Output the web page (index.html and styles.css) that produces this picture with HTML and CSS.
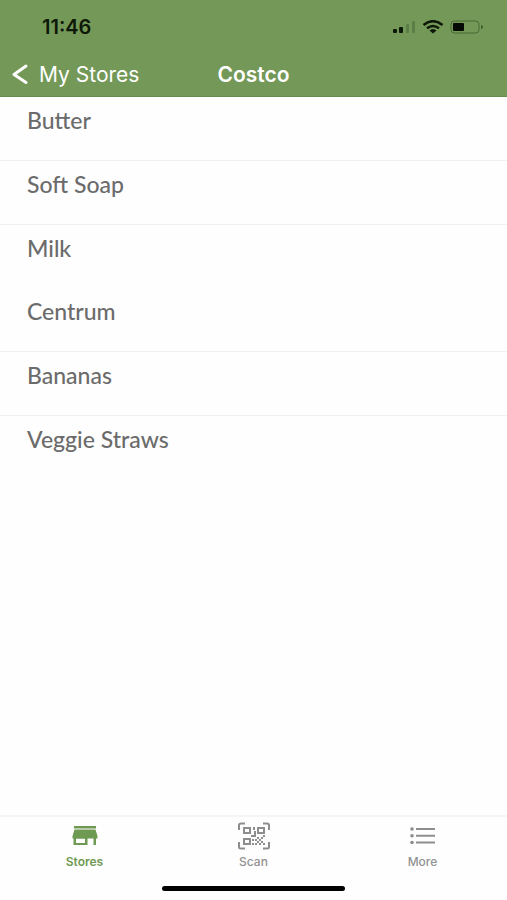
FILE: index.html
```html
<!DOCTYPE html>
<html lang="en">
<head>
<meta charset="utf-8">
<meta name="viewport" content="width=device-width, initial-scale=1">
<title>Costco</title>
<link rel="stylesheet" href="styles.css">
</head>
<body>
<header class="header">
  <div class="status">
    <span class="time">11:46</span>
    <div class="indicators">
      <svg width="24" height="14" viewBox="0 0 24 14" aria-hidden="true">
        <rect x="1" y="9" width="4" height="4" rx="1" fill="#0d1808"/>
        <rect x="7" y="7" width="4" height="6" rx="1" fill="#0d1808"/>
        <rect x="14" y="4" width="3" height="9" rx="1" fill="#5a7e45"/>
        <rect x="20" y="1" width="3" height="12" rx="1" fill="#5a7e45"/>
      </svg>
      <svg width="22" height="14" viewBox="0 0 22 14" fill="none" stroke="#0d1808" aria-hidden="true">
        <path d="M1.5 5Q11-2.5 20.5 5" stroke-width="2.6"/>
        <path d="M5 8.3Q11 3.6 17 8.3" stroke-width="2.4"/>
        <path d="M7.5 10.5Q11 7.5 14.5 10.5L11 13.5Z" fill="#0d1808" stroke="none"/>
      </svg>
      <svg width="34" height="14" viewBox="0 0 34 14" aria-hidden="true">
        <rect x="1" y="1" width="28" height="12" rx="3.5" fill="none" stroke="#496b35"/>
        <rect x="3" y="3" width="11" height="8" rx="1" fill="#050a03"/>
        <path d="M31 5Q33 5.5 33 7T31 9Z" fill="#3d5b2c"/>
      </svg>
    </div>
  </div>
  <nav class="navbar">
    <a class="back" href="#stores">
      <svg width="16" height="20" viewBox="0 0 16 20" fill="none" stroke="#fff" stroke-width="3" stroke-linecap="round" stroke-linejoin="round" aria-hidden="true"><path d="M14 2L2 10.5L14 18.5"/></svg>
      <span>My Stores</span>
    </a>
    <h1 class="title">Costco</h1>
  </nav>
</header>
<main class="content">
  <ul class="items">
    <li class="item">Butter</li>
    <li class="item">Soft Soap</li>
    <li class="item item-joined">Milk</li>
    <li class="item">Centrum</li>
    <li class="item">Bananas</li>
    <li class="item item-joined">Veggie Straws</li>
  </ul>
</main>
<footer class="footer">
  <nav class="tabs">
    <a class="tab tab-active" href="#stores" aria-current="page">
      <svg width="34" height="28" viewBox="0 0 34 28" fill="#6f9a54" aria-hidden="true">
        <path d="M6 4H28V6.5H6ZM6.5 7.5H27.5L29.5 14V16.5H4.5V14Z"/>
        <path fill-rule="evenodd" d="M5.5 16H19.5V23H5.5ZM8 16.5V21H17V16.5ZM25.5 16H28V23H25.5Z"/>
      </svg>
      <span>Stores</span>
    </a>
    <a class="tab" href="#scan">
      <svg width="34" height="28" viewBox="0 0 34 28" fill="none" stroke="#8e8e8e" stroke-width="2" aria-hidden="true">
        <path d="M2 8V3Q2 1.5 4 1.5H8M26 1.5H30Q32 1.5 32 3V8M2 20V25Q2 26.5 4 26.5H8M26 26.5H30Q32 26.5 32 25V20"/>
        <path d="M7 6H13V11H7ZM21 6H27V11H21ZM7 17H13V22H7Z"/>
        <path d="M17 5V8M18 9V15M14 14H18M16 17V19M16 21V23M18 18H20M20 16H22M22 18H24M24 16H26M26 14H28M20 20H22M24 20H26M18 22H20M22 22H24M26 22H28"/>
      </svg>
      <span>Scan</span>
    </a>
    <a class="tab" href="#more">
      <svg width="34" height="28" viewBox="0 0 34 28" aria-hidden="true">
        <g fill="#8e8e8e"><circle cx="6" cy="7" r="1.8"/><circle cx="6" cy="13.8" r="1.8"/><circle cx="6" cy="20.5" r="1.8"/></g>
        <path d="M10 7H29M10 13.8H29M10 20.5H29" stroke="#8e8e8e" stroke-width="2"/>
      </svg>
      <span>More</span>
    </a>
  </nav>
  <div class="home-indicator"></div>
</footer>
</body>
</html>
```
FILE: styles.css
```css
* { box-sizing: border-box; }

body {
  display: flex;
  flex-direction: column;
  min-height: 100vh;
  margin: 0;
  background: #fefefe;
  color: #6b6b6b;
  font-family: Inter, "Liberation Sans", sans-serif;
}

a { color: inherit; text-decoration: none; }

.header {
  background: #739857;
  border-bottom: 1px solid #678b4c;
}

.status {
  display: flex;
  align-items: center;
  justify-content: space-between;
  height: 52px;
  padding: 2px 23px 0 42px;
}

.time {
  color: #0d1808;
  font-size: 20px;
  font-weight: 600;
}

.indicators { display: flex; gap: 6px; }

.navbar {
  display: grid;
  grid-template-columns: 1fr auto 1fr;
  align-items: center;
  height: 44px;
  padding: 0 12px;
  color: #fff;
}

.back {
  display: flex;
  align-items: center;
  gap: 11px;
  font-size: 21px;
}

.title {
  margin: 0;
  font-size: 21px;
  font-weight: 600;
}

.content { flex: 1; }

.items {
  margin: 0;
  padding: 0;
  list-style: none;
}

.item {
  padding: 10px 27px 27px;
  border-bottom: 1px solid #f1f1f1;
  font-family: Lato, "Open Sans", sans-serif;
  font-size: 23px;
  font-weight: 500;
  line-height: 26px;
}

.item-joined { border-bottom: 0; }

.footer { border-top: 2px solid #f5f5f5; }

.tabs {
  display: grid;
  grid-template-columns: repeat(3, 1fr);
}

.tab {
  display: flex;
  flex-direction: column;
  align-items: center;
  gap: 4px;
  padding-top: 5px;
  color: #929292;
  font-size: 12px;
  font-weight: 500;
  line-height: 16px;
}

.tab-active {
  color: #6f9a54;
  font-weight: 600;
}

.home-indicator {
  width: 36%;
  height: 5px;
  margin: 16px auto 9px;
  border-radius: 3px;
  background: #000;
}
```
